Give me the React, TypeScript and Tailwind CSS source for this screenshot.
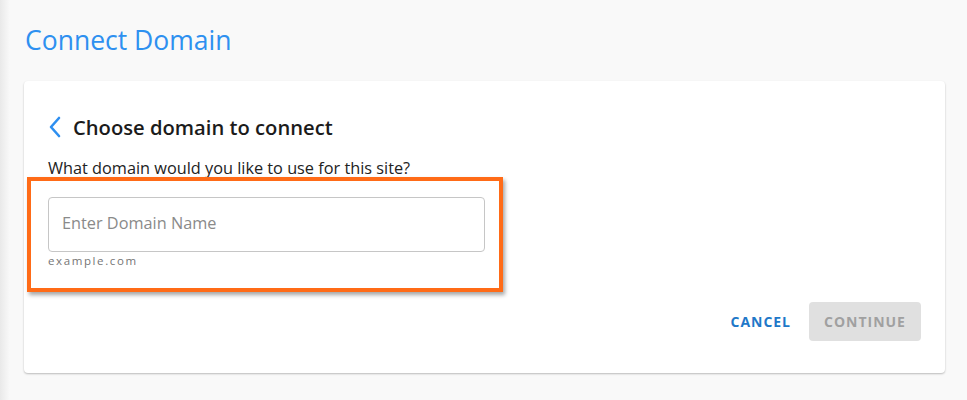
import React from "react";

export default function App() {
  return (
    <div
      className="relative w-[967px] h-[400px] bg-[#f9f9f9] overflow-hidden"
      style={{ fontFamily: '"Open Sans", "Noto Sans", sans-serif' }}
    >
      <div className="absolute left-0 top-0 h-full w-[10px] bg-gradient-to-r from-[#e9e9e9] to-[#f9f9f9]" />
      <div className="relative pl-[24px] pr-[22px] pt-[22px]">
        <h1 className="text-[26.5px] leading-[36px] text-[#2e90f0] font-normal pl-[1px]">Connect Domain</h1>
        <div className="mt-[23px] h-[292px] bg-white rounded-[4px] shadow-[0_1px_2px_rgba(0,0,0,0.25)] flex flex-col">
          <div className="flex items-center pt-[32px] pl-[24px]">
            <svg width="14" height="22" viewBox="0 0 14 22" className="mr-[11px]">
              <path d="M11 2 L3 11 L11 20" fill="none" stroke="#2e8ff0" strokeWidth="2.6" strokeLinecap="round" strokeLinejoin="round" />
            </svg>
            <span className="text-[20.2px] leading-[28px] font-semibold text-[#1b1b1b]">Choose domain to connect</span>
          </div>
          <p className="pl-[24px] mt-[18px] text-[16.3px] leading-[18px] text-[#222]">What domain would you like to use for this site?</p>
          <div className="ml-[3px] w-[476px] h-[115px] border-[4px] border-[#ff6b17] shadow-[2px_3px_4px_rgba(0,0,0,0.35)] pl-[17px] pr-[14px] pt-[16px]">
            <div className="h-[55px] border border-[#c6c6c6] rounded-[4px] flex items-center px-[13px] pb-[2px]">
              <span className="text-[16.3px] text-[#8a8a8a]">Enter Domain Name</span>
            </div>
            <div className="mt-[1px] text-[11.5px] leading-[16px] tracking-[0.14em] text-[#757575]">example.com</div>
          </div>
          <div className="flex justify-end items-center pr-[24px] mt-[10px]">
            <button className="mr-[2px] px-[16px] h-[39px] text-[14px] font-bold tracking-[0.07em] text-[#1f78c8]">CANCEL</button>
            <button className="w-[112px] h-[39px] rounded-[4px] bg-[#e0e0e0] text-[14px] font-bold tracking-[0.07em] text-[#a0a0a0]">CONTINUE</button>
          </div>
        </div>
      </div>
    </div>
  );
}
